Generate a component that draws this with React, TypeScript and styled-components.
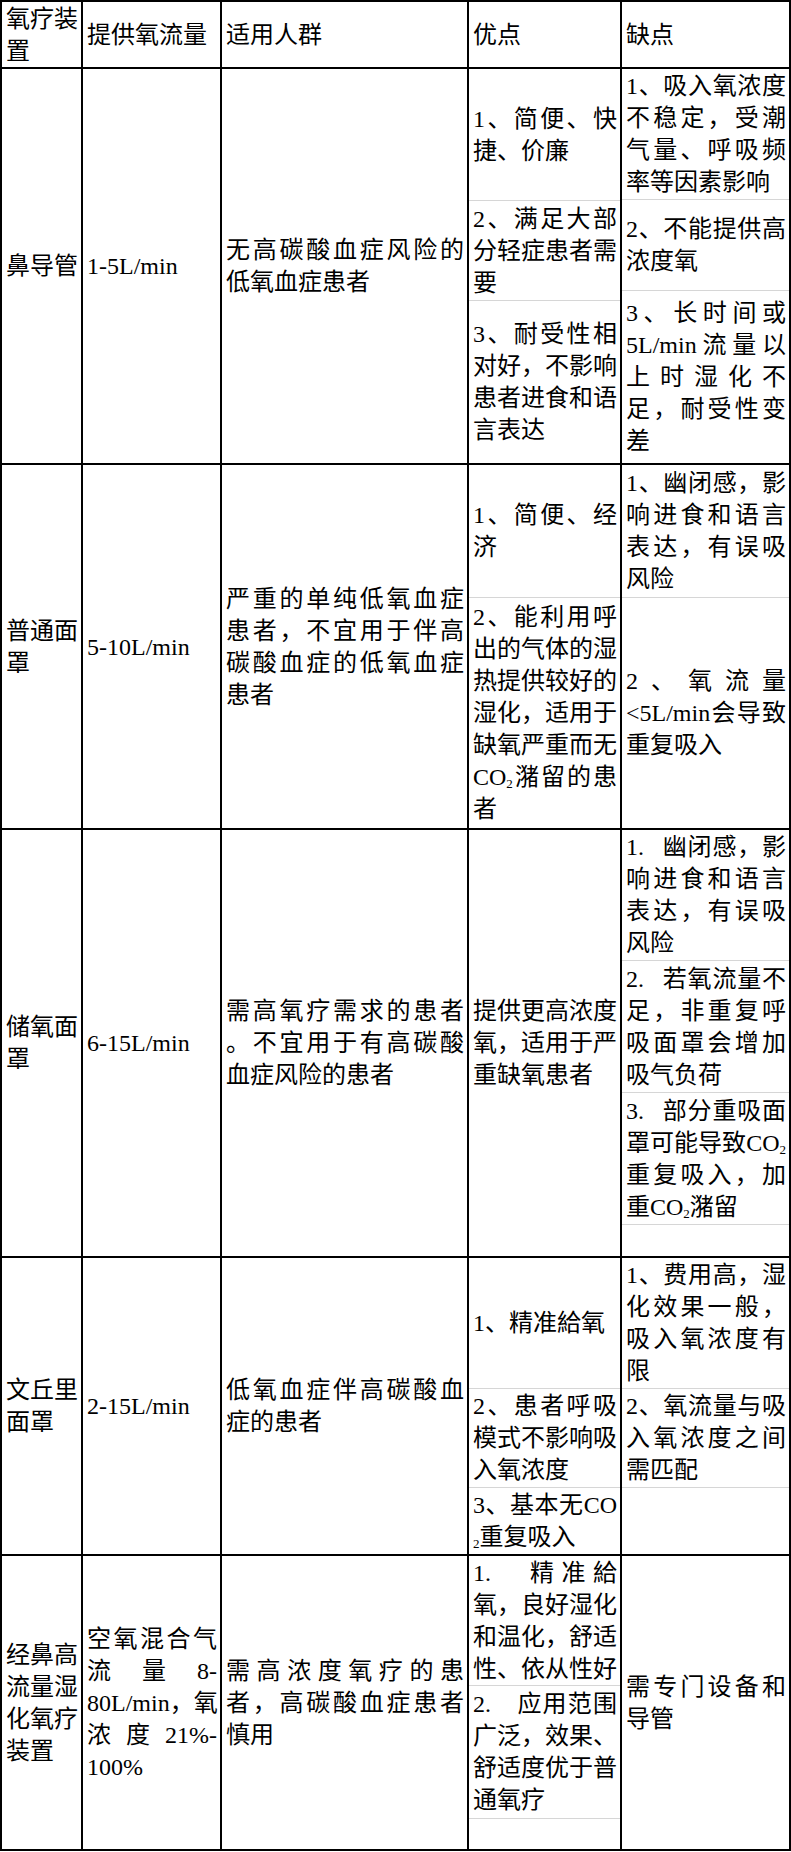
import React from 'react';
import styled, { createGlobalStyle } from 'styled-components';

const GlobalStyle = createGlobalStyle`
  html, body { margin: 0; padding: 0; background: #fff; }
  body {
    font-family: "Liberation Serif", "Noto Sans CJK SC", serif;
    color: #000;
  }
`;

const Table = styled.div`
  display: grid;
  grid-template-columns: 79px 137px 245px 151px 167px;
  grid-template-rows: 65px 394px 363px 426px 296px 293px;
  gap: 2px;
  padding: 2px;
  width: 791px;
  box-sizing: border-box;
  background: #000;
  font-size: 24px;
  line-height: 32px;
`;

const Cell = styled.div`
  background: #fff;
  display: flex;
  flex-direction: column;
  justify-content: center;
  padding: 0 3px 0 4px;
  min-width: 0;
`;

const Stack = styled.div`
  background: #fff;
  display: flex;
  flex-direction: column;
  min-width: 0;
`;

const Part = styled.div<{ $h?: number }>`
  display: flex;
  flex-direction: column;
  justify-content: center;
  padding: 0 3px 0 4px;
  box-sizing: border-box;
  ${(p) =>
    p.$h
      ? `height: ${p.$h}px; flex: none; border-bottom: 1px solid #d6d6d6;`
      : 'flex: 1;'}
`;

const Line = styled.div<{ $justify: boolean }>`
  white-space: nowrap;
  text-align: ${(p) => (p.$justify ? 'justify' : 'left')};
  text-align-last: ${(p) => (p.$justify ? 'justify' : 'left')};
`;

const Sub = styled.span`
  font-size: 13px;
  line-height: 0;
  vertical-align: -3px;
`;

type Piece = { h?: number; lines: string[] };
type Row = {
  name: string[];
  flow: string[];
  group: string[];
  pros: Piece[];
  cons: Piece[];
};

// numbered items written as "1." keep a wider gap after the number, like a tab in the source doc
const rows: Row[] = [
  {
    name: ['鼻导管'],
    flow: ['1-5L/min'],
    group: ['无高碳酸血症风险的', '低氧血症患者'],
    pros: [
      { h: 132, lines: ['1、简便、快', '捷、价廉'] },
      { h: 100, lines: ['2、满足大部', '分轻症患者需', '要'] },
      { lines: ['3、耐受性相', '对好，不影响', '患者进食和语', '言表达'] },
    ],
    cons: [
      { h: 131, lines: ['1、吸入氧浓度', '不稳定，受潮', '气量、呼吸频', '率等因素影响'] },
      { h: 91, lines: ['2、不能提供高', '浓度氧'] },
      { lines: ['3、长时间或', '5L/min流量以', '上时湿化不', '足，耐受性变', '差'] },
    ],
  },
  {
    name: ['普通面', '罩'],
    flow: ['5-10L/min'],
    group: ['严重的单纯低氧血症', '患者，不宜用于伴高', '碳酸血症的低氧血症', '患者'],
    pros: [
      { h: 133, lines: ['1、简便、经', '济'] },
      {
        lines: ['2、能利用呼', '出的气体的湿', '热提供较好的', '湿化，适用于', '缺氧严重而无', 'CO₂潴留的患', '者'],
      },
    ],
    cons: [
      { h: 133, lines: ['1、幽闭感，影', '响进食和语言', '表达，有误吸', '风险'] },
      { lines: ['2、氧流量', '<5L/min会导致', '重复吸入'] },
    ],
  },
  {
    name: ['储氧面', '罩'],
    flow: ['6-15L/min'],
    group: ['需高氧疗需求的患者', '。不宜用于有高碳酸', '血症风险的患者'],
    pros: [{ lines: ['提供更高浓度', '氧，适用于严', '重缺氧患者'] }],
    cons: [
      { h: 131, lines: ['1.\u2002 幽闭感，影', '响进食和语言', '表达，有误吸', '风险'] },
      { h: 132, lines: ['2.\u2002 若氧流量不', '足，非重复呼', '吸面罩会增加', '吸气负荷'] },
      { h: 132, lines: ['3.\u2002 部分重吸面', '罩可能导致CO₂', '重复吸入，加', '重CO₂潴留'] },
      { lines: [] },
    ],
  },
  {
    name: ['文丘里', '面罩'],
    flow: ['2-15L/min'],
    group: ['低氧血症伴高碳酸血', '症的患者'],
    pros: [
      { h: 131, lines: ['1、精准給氧'] },
      { h: 99, lines: ['2、患者呼吸', '模式不影响吸', '入氧浓度'] },
      { lines: ['3、基本无CO', '₂重复吸入'] },
    ],
    cons: [
      { h: 131, lines: ['1、费用高，湿', '化效果一般，', '吸入氧浓度有', '限'] },
      { h: 99, lines: ['2、氧流量与吸', '入氧浓度之间', '需匹配'] },
      { lines: [] },
    ],
  },
  {
    name: ['经鼻高', '流量湿', '化氧疗', '装置'],
    flow: ['空氧混合气', '流量8-', '80L/min，氧', '浓度21%-', '100%'],
    group: ['需高浓度氧疗的患', '者，高碳酸血症患者', '慎用'],
    pros: [
      { h: 130, lines: ['1.\u3000精准給', '氧，良好湿化', '和温化，舒适', '性、依从性好'] },
      { h: 133, lines: ['2.\u3000应用范围', '广泛，效果、', '舒适度优于普', '通氧疗'] },
      { lines: [] },
    ],
    cons: [{ lines: ['需专门设备和', '导管'] }],
  },
];

const renderText = (s: string) => {
  const bits = s.split('₂');
  return bits.map((b, i) => (
    <React.Fragment key={i}>
      {i > 0 && <Sub>2</Sub>}
      {b}
    </React.Fragment>
  ));
};

const Lines = ({ lines }: { lines: string[] }) => (
  <>
    {lines.map((l, i) => (
      <Line key={i} $justify={i < lines.length - 1}>
        {renderText(l)}
      </Line>
    ))}
  </>
);

const PieceStack = ({ pieces }: { pieces: Piece[] }) => (
  <Stack>
    {pieces.map((p, i) => (
      <Part key={i} $h={p.h}>
        <Lines lines={p.lines} />
      </Part>
    ))}
  </Stack>
);

export default function App() {
  return (
    <>
      <GlobalStyle />
      <Table>
        <Cell><Lines lines={['氧疗装', '置']} /></Cell>
        <Cell><Lines lines={['提供氧流量']} /></Cell>
        <Cell><Lines lines={['适用人群']} /></Cell>
        <Cell><Lines lines={['优点']} /></Cell>
        <Cell><Lines lines={['缺点']} /></Cell>
        {rows.map((r, i) => (
          <React.Fragment key={i}>
            <Cell><Lines lines={r.name} /></Cell>
            <Cell><Lines lines={r.flow} /></Cell>
            <Cell><Lines lines={r.group} /></Cell>
            <PieceStack pieces={r.pros} />
            <PieceStack pieces={r.cons} />
          </React.Fragment>
        ))}
      </Table>
    </>
  );
}
